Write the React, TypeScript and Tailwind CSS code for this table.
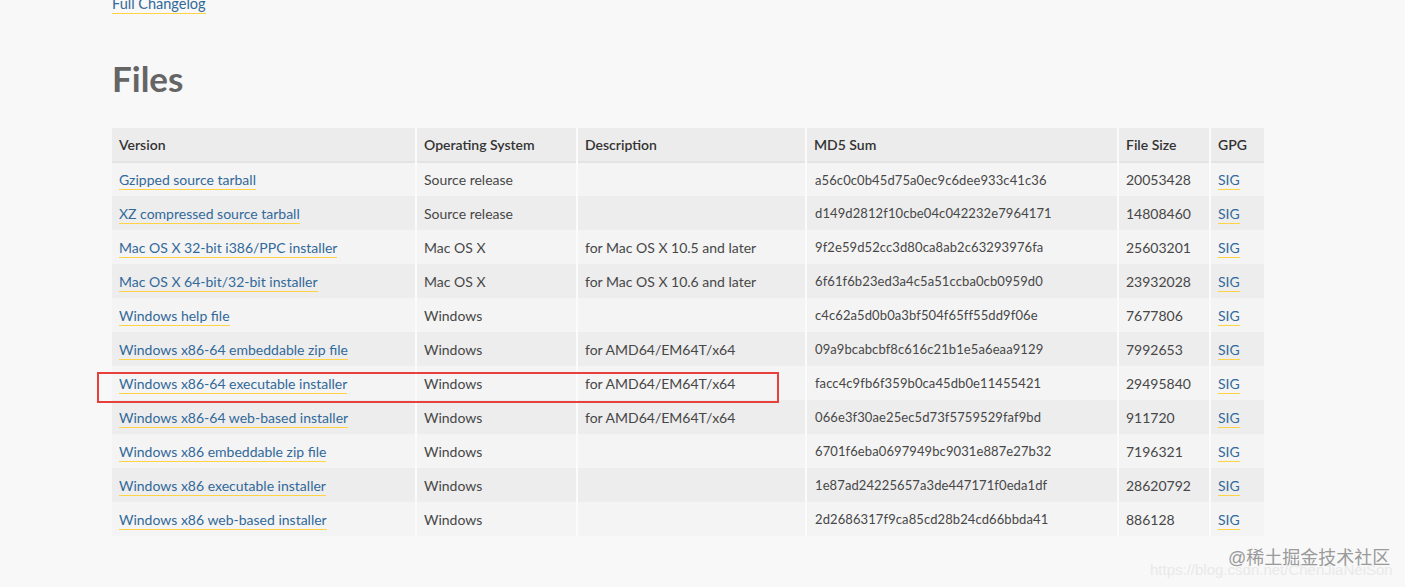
import React from "react";

type FileRow = {
  version: string;
  os: string;
  description: string;
  md5: string;
  size: string;
};

const files: FileRow[] = [
  { version: "Gzipped source tarball", os: "Source release", description: "", md5: "a56c0c0b45d75a0ec9c6dee933c41c36", size: "20053428" },
  { version: "XZ compressed source tarball", os: "Source release", description: "", md5: "d149d2812f10cbe04c042232e7964171", size: "14808460" },
  { version: "Mac OS X 32-bit i386/PPC installer", os: "Mac OS X", description: "for Mac OS X 10.5 and later", md5: "9f2e59d52cc3d80ca8ab2c63293976fa", size: "25603201" },
  { version: "Mac OS X 64-bit/32-bit installer", os: "Mac OS X", description: "for Mac OS X 10.6 and later", md5: "6f61f6b23ed3a4c5a51ccba0cb0959d0", size: "23932028" },
  { version: "Windows help file", os: "Windows", description: "", md5: "c4c62a5d0b0a3bf504f65ff55dd9f06e", size: "7677806" },
  { version: "Windows x86-64 embeddable zip file", os: "Windows", description: "for AMD64/EM64T/x64", md5: "09a9bcabcbf8c616c21b1e5a6eaa9129", size: "7992653" },
  { version: "Windows x86-64 executable installer", os: "Windows", description: "for AMD64/EM64T/x64", md5: "facc4c9fb6f359b0ca45db0e11455421", size: "29495840" },
  { version: "Windows x86-64 web-based installer", os: "Windows", description: "for AMD64/EM64T/x64", md5: "066e3f30ae25ec5d73f5759529faf9bd", size: "911720" },
  { version: "Windows x86 embeddable zip file", os: "Windows", description: "", md5: "6701f6eba0697949bc9031e887e27b32", size: "7196321" },
  { version: "Windows x86 executable installer", os: "Windows", description: "", md5: "1e87ad24225657a3de447171f0eda1df", size: "28620792" },
  { version: "Windows x86 web-based installer", os: "Windows", description: "", md5: "2d2686317f9ca85cd28b24cd66bbda41", size: "886128" },
];

const linkCls = "text-[#31699a] border-b border-[#ffd343] pb-[1px]";
const sep = "border-r-2 border-[#fbfbfb]";

export default function App() {
  return (
    <div className="relative w-[1405px] h-[587px] overflow-hidden bg-[#f8f8f8] text-[14px] text-[#474747] font-['Lato','Open_Sans',sans-serif]">
      <div className="pl-[112px] -mt-[7px]">
        <a className={linkCls + " text-[14.5px] leading-[19px]"}>Full Changelog</a>

        <h2 className="mt-[44px] text-[35px] leading-[40px] font-bold text-[#656565]">Files</h2>

        <table className="mt-[30px] border-collapse table-fixed w-[1152px]">
          <colgroup>
            <col className="w-[304px]" />
            <col className="w-[161px]" />
            <col className="w-[229px]" />
            <col className="w-[312px]" />
            <col className="w-[92px]" />
            <col className="w-[54px]" />
          </colgroup>
          <thead>
            <tr className="bg-[#ececec] h-[34px] border-b-2 border-[#e3e3e3]">
              {["Version", "Operating System", "Description", "MD5 Sum", "File Size", "GPG"].map((h, i) => (
                <th key={h} className={"text-left font-semibold text-[#333] px-[7px] " + (i < 5 ? sep : "")}>
                  {h}
                </th>
              ))}
            </tr>
          </thead>
          <tbody>
            {files.map((f, i) => (
              <tr key={f.version} className={"h-[34px] " + (i % 2 === 0 ? "bg-[#f4f4f4]" : "bg-[#ededed]")}>
                <td className={"px-[7px] " + sep}>
                  <a className={linkCls}>{f.version}</a>
                </td>
                <td className={"px-[7px] " + sep}>{f.os}</td>
                <td className={"px-[7px] " + sep}>{f.description}</td>
                <td className={"px-[8px] pt-[2px] text-[13px] tracking-[0.1px] " + sep}>{f.md5}</td>
                <td className={"px-[7px] " + sep}>{f.size}</td>
                <td className="px-[7px]">
                  <a className={linkCls}>SIG</a>
                </td>
              </tr>
            ))}
          </tbody>
        </table>
      </div>

      {/* annotation box around the x86-64 executable installer row */}
      <div className="absolute left-[97px] top-[372px] w-[682px] h-[31px] border-2 border-[#e8413c]" />

      {/* watermark */}
      <div className="absolute left-[1150px] top-[560px] text-[15px] leading-[20px] text-[#e9e9e9] font-['Liberation_Sans',sans-serif] whitespace-nowrap">
        https://blog.csdn.net/ChenJiaNeiSon
      </div>
      <div className="absolute left-[1228px] top-[547px] text-[18px] leading-[22px] text-[#9a9a9a] font-['Liberation_Sans','Noto_Sans_CJK_SC',sans-serif] whitespace-nowrap">
        @稀土掘金技术社区
      </div>
    </div>
  );
}
